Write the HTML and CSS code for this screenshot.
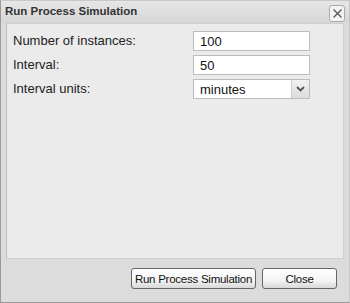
FILE: index.html
```html
<!DOCTYPE html>
<html>
<head>
<meta charset="utf-8">
<link rel="stylesheet" href="styles.css">
</head>
<body>
<div class="window">
  <div class="titlebar">
    <span class="title">Run Process Simulation</span>
    <span class="close-btn">
      <svg width="11" height="11" viewBox="0 0 11 11"><path d="M1.5 1.5 L9.5 9.5 M9.5 1.5 L1.5 9.5" stroke="#555" stroke-width="1.3" fill="none"/></svg>
    </span>
  </div>
  <div class="panel">
    <div class="form">
      <label class="lbl">Number of instances:</label>
      <div class="field">100</div>
      <label class="lbl">Interval:</label>
      <div class="field">50</div>
      <label class="lbl">Interval units:</label>
      <div class="field select">
        <span class="sel-text">minutes</span>
        <span class="sel-btn">
          <svg width="9" height="6" viewBox="0 0 9 6"><path d="M1 1 L4.5 4.5 L8 1" stroke="#555" stroke-width="1.8" fill="none"/></svg>
        </span>
      </div>
    </div>
  </div>
  <div class="footer">
    <button class="btn btn-run">Run Process Simulation</button>
    <button class="btn btn-close">Close</button>
  </div>
</div>
</body>
</html>
```
FILE: styles.css
```css
html, body {
  margin: 0;
  padding: 0;
  background: #ffffff;
}
.window {
  width: 350px;
  height: 303px;
  box-sizing: border-box;
  border: 1px solid #9a9a9a;
  border-top-color: #c8c8c8;
  border-right-color: #c8c8c8;
  background: #dcdcdc;
  font-family: "Liberation Sans", Arial, sans-serif;
  font-size: 13px;
  color: #222;
  display: flex;
  flex-direction: column;
}
.titlebar {
  height: 22px;
  display: flex;
  align-items: center;
  justify-content: space-between;
  padding: 0 4px 0 4px;
  background: linear-gradient(#e6e6e6, #d6d6d6);
}
.title {
  font-weight: bold;
  font-size: 11.5px;
  color: #333;
  margin-top: -2px;
}
.close-btn {
  width: 16px;
  height: 17px;
  box-sizing: border-box;
  border: 1px solid #aaa;
  border-radius: 3px;
  background: #f4f4f4;
  display: flex;
  align-items: center;
  justify-content: center;
  margin-top: 2px;
}
.panel {
  margin: 0 5px;
  height: 236px;
  box-sizing: border-box;
  background: #ebebeb;
  border: 1px solid #cfcfcf;
  border-left-color: #bdbdbd;
  padding: 7px 0 0 6px;
}
.form {
  display: grid;
  grid-template-columns: 180px 117px;
  row-gap: 4px;
  align-items: center;
}
.lbl {
  color: #222;
  margin-top: -1px;
}
.field {
  height: 20px;
  box-sizing: border-box;
  border: 1px solid #bcbcbc;
  background: #fff;
  padding: 0 6px;
  display: flex;
  align-items: center;
  color: #111;
}
.select {
  padding-right: 0;
  justify-content: space-between;
}
.sel-btn {
  width: 18px;
  height: 18px;
  box-sizing: border-box;
  border-left: 1px solid #ccc;
  background: linear-gradient(#f2f2f2, #dcdcdc);
  display: flex;
  align-items: center;
  justify-content: center;
}
.footer {
  flex: 1;
  display: flex;
  justify-content: flex-end;
  align-items: flex-start;
  gap: 6px;
  padding: 9px 12px 0 0;
}
.btn {
  height: 21px;
  box-sizing: border-box;
  border: 1px solid #666;
  border-radius: 3px;
  background: linear-gradient(#ffffff 0%, #f4f4f4 60%, #d8d8d8 100%);
  font-family: "Liberation Sans", Arial, sans-serif;
  font-size: 11.5px;
  letter-spacing: -0.25px;
  color: #111;
  padding: 0;
  white-space: nowrap;
}
.btn-run { width: 125px; }
.btn-close { width: 75px; }
```
